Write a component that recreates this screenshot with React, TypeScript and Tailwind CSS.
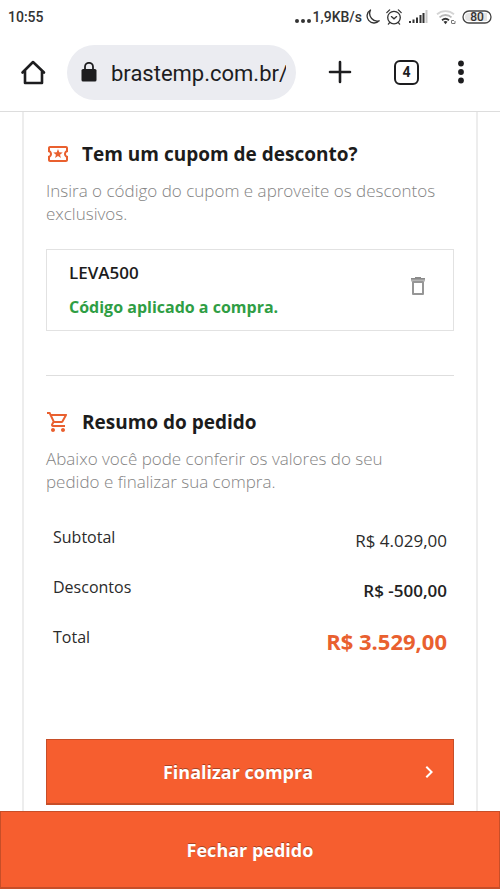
import { ReactNode } from "react"
import {
  MdChevronRight,
  MdOutlineLocalActivity,
  MdOutlineShoppingCart,
} from "react-icons/md"

type SectionProps = {
  icon: ReactNode
  title: string
  description: string
}

const TOTALS = [
  { label: "Subtotal", value: "R$ 4.029,00", className: "text-[17px] text-[#2b2b2b]" },
  { label: "Descontos", value: "R$ -500,00", className: "text-[17px] font-semibold text-[#222222]" },
  { label: "Total", value: "R$ 3.529,00", className: "text-[22px] font-bold text-[#e9602f]" },
]

const StatusBar = () => (
  <div className="flex h-[33px] items-center justify-between px-2 text-sm font-medium text-[#333333]">
    <span>10:55</span>
    <div className="flex items-center">
      <svg className="mr-0.5 mt-2 h-1 w-4" viewBox="0 0 16 4" fill="#333333">
        <circle cx="2" cy="2" r="2" />
        <circle cx="8" cy="2" r="2" />
        <circle cx="14" cy="2" r="2" />
      </svg>
      <span>1,9KB/s</span>
      <svg className="ml-0.5 h-4 w-4" viewBox="0 0 16 16" fill="none" stroke="#333333" strokeWidth="1.3" strokeLinejoin="round">
        <path d="M6.500 1A7 7 0 1 0 15.200 11.800C9.500 13.500 3.500 7.500 6.500 1Z" />
      </svg>
      <svg className="ml-1.5 h-4 w-4" viewBox="0 0 16 16" fill="none" stroke="#333333" strokeWidth="1.3" strokeLinecap="round">
        <circle cx="8" cy="8.6" r="6.3" />
        <path d="M.8 3.6 3.6.9M15.2 3.6 12.4.9M5.4 7.6 8 9.8l2.6-2.2M3.4 13.8l-1 1.3M12.6 13.8l1 1.3" />
      </svg>
      <svg className="ml-1.5 h-3.5 w-5" viewBox="0 0 20 14" fill="#333333">
        <path d="M1 11h2v2H1zM4.500 9.500h2V13h-2zM8 7.500h2V13H8zM11.500 5h2v8h-2zM14.500 3h2v10h-2z" />
        <path fill="#c9c9c9" d="M17.500 0h2v13h-2z" />
      </svg>
      <svg className="ml-2 h-4 w-5" viewBox="0 0 20 16" fill="none" strokeWidth="1.800">
        <path stroke="#d4d4d4" d="M1 5.200a13 13 0 0 1 17 0" />
        <path stroke="#b8b8b8" d="M3.500 8.300a9 9 0 0 1 12 0" />
        <path stroke="#333333" d="M6 11.200a5.500 5.500 0 0 1 7 0" />
        <path fill="#333333" d="M7.500 12.800a3 3 0 0 1 4 0l-2 2.400z" />
        <path stroke="#777777" strokeWidth="1" d="M15.500 14.500v-3h2.500M16 14.500h3v-2.500" />
      </svg>
      <svg className="ml-1.5 h-3.5 w-[30px]" viewBox="0 0 30 14">
        <rect x="1" y="1" width="28" height="12" rx="6" fill="#ffffff" stroke="#444444" strokeWidth="1.300" />
        <path fill="#e4e4e4" d="M3 7a4 4 0 0 1 4-4h18v8H7a4 4 0 0 1-4-4z" />
        <text x="15" y="11" textAnchor="middle" fontSize="12" fontWeight="500" fill="#333333">80</text>
      </svg>
    </div>
  </div>
)

const BrowserBar = () => (
  <header className="flex h-[79px] items-center border-b border-[#dddddd] pl-[19px] pr-[29px] text-[#1d1d1f]">
    <button type="button" aria-label="Início">
      <svg className="h-7 w-7" viewBox="0 0 28 28" fill="none" stroke="currentColor" strokeWidth="2.600" strokeLinecap="round" strokeLinejoin="round">
        <path d="M3.500 14.500 14 4l11 10.500M6 12.500V25h17V12.500" />
      </svg>
    </button>
    <div className="ml-5 flex h-[55px] min-w-0 flex-1 items-center rounded-full bg-[#ebecf1] pl-3 pr-2.5">
      <svg className="h-5 w-5 shrink-0" viewBox="0 0 20 20">
        <path fill="none" stroke="currentColor" strokeWidth="1.800" d="M6 8V4.800a4 4 0 0 1 8 0V8" />
        <rect x="2.500" y="7" width="15" height="12.500" rx="1.600" fill="currentColor" />
      </svg>
      <input
        type="text"
        aria-label="Endereço"
        defaultValue="brastemp.com.br/"
        className="ml-3 h-8 w-full min-w-0 bg-transparent pt-0.5 text-[22px] outline-none"
      />
    </div>
    <button type="button" aria-label="Nova guia" className="ml-8">
      <svg className="h-6 w-6" viewBox="0 0 24 24" stroke="currentColor" strokeWidth="2.600" strokeLinecap="round">
        <path d="M12 2v20M2 12h20" />
      </svg>
    </button>
    <button
      type="button"
      aria-label="Guias abertas"
      className="ml-[42px] h-[25px] w-[25px] rounded-md border-2 border-current text-sm leading-5 font-bold"
    >
      4
    </button>
    <button type="button" aria-label="Menu" className="ml-8">
      <svg className="h-6 w-5" viewBox="0 0 20 24" fill="currentColor">
        <circle cx="10" cy="3.500" r="2.900" />
        <circle cx="10" cy="12" r="2.900" />
        <circle cx="10" cy="20.500" r="2.900" />
      </svg>
    </button>
  </header>
)

const SectionHeader = ({ icon, title, description }: SectionProps) => (
  <>
    <div className="flex items-center gap-3 text-[#e9602f]">
      {icon}
      <h2 className="text-[19px] leading-7 font-bold text-[#1c1c1c]">{title}</h2>
    </div>
    <p className="mt-[11px] text-[17px] leading-[23px] font-light whitespace-pre-line text-[#848484]">{description}</p>
  </>
)

export default function App() {
  return (
    <div className="flex min-h-screen flex-col bg-white font-['Roboto',sans-serif]">
      <StatusBar />
      <BrowserBar />
      <main className="mx-[22px] flex-1 border-x-2 border-[#ededed] px-[22px] pt-7 pb-1.5 font-['Open_Sans',sans-serif]">
        <section>
          <SectionHeader
            icon={<MdOutlineLocalActivity className="h-6 w-6" />}
            title="Tem um cupom de desconto?"
            description="Insira o código do cupom e aproveite os descontos exclusivos."
          />
          <div className="mt-6 flex h-[82px] items-center justify-between border border-[#e2e2e2] pl-[22px] pr-[23px]">
            <div className="leading-[34px]">
              <p className="text-[17px] font-semibold text-[#1c1c1c]">LEVA500</p>
              <p className="text-base leading-[34px] font-bold text-[#2f9e44]">Código aplicado a compra.</p>
            </div>
            <button type="button" aria-label="Remover cupom" className="mb-2">
              <svg className="h-6 w-6" viewBox="0 0 24 24" fill="none">
                <path fill="#b5b5b5" d="M5 4h14v3.500H5z" />
                <path fill="#8a8a8a" d="M9 3h6v1H9zM5 4h14v1.500H5z" />
                <path stroke="#969696" strokeWidth="2" strokeLinejoin="round" d="M7 8h10v12H7z" />
              </svg>
            </button>
          </div>
        </section>

        <hr className="mt-11 border-[#dedede]" />

        <section className="pt-8">
          <SectionHeader
            icon={<MdOutlineShoppingCart className="h-6 w-6" />}
            title="Resumo do pedido"
            description={"Abaixo você pode conferir os valores do seu\npedido e finalizar sua compra."}
          />
          <table className="mt-[21px] w-full">
            <tbody>
              {TOTALS.map(({ label, value, className }) => (
                <tr key={label} className="h-[50px]">
                  <th scope="row" className="pb-1 pl-[7px] text-left text-base font-normal text-[#2b2b2b]">{label}</th>
                  <td className={`pt-1 pr-[7px] text-right ${className}`}>{value}</td>
                </tr>
              ))}
            </tbody>
          </table>
          <button
            type="button"
            className="mt-[75px] flex h-[66px] w-full items-center border border-b-2 border-[#c74e28] bg-[#f65e2f] px-3 text-lg font-bold text-white [text-shadow:0_-1px_0_#a84224]"
          >
            <span className="flex-1">Finalizar compra</span>
            <MdChevronRight className="h-6 w-6" />
          </button>
        </section>
      </main>
      <button
        type="button"
        className="sticky bottom-0 h-[78px] w-full shrink-0 border border-b-2 border-[#c74e28] bg-[#f65e2f] font-['Open_Sans',sans-serif] text-lg font-bold text-white [text-shadow:0_-1px_0_#a84224]"
      >
        Fechar pedido
      </button>
    </div>
  )
}
